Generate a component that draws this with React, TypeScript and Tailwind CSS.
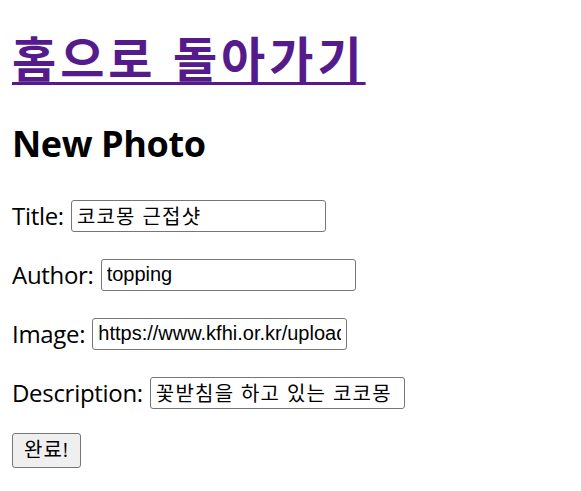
const fieldFont = "font-['Liberation_Sans','Noto_Sans_CJK_KR',sans-serif]";

const Field = ({ label, value, korean }: { label: string; value: string; korean?: boolean }) => (
  <p className="mt-6 flex h-[35px] items-center">
    <label className="mr-[7px] tracking-[-0.3px]">{label}</label>
    <input
      type="text"
      defaultValue={value}
      className={`h-[32px] w-[255px] rounded-[3px] border-[1.5px] border-[#767676] bg-white px-[5px] text-[20px] text-black outline-none ${fieldFont} ${korean ? "tracking-[1.2px]" : ""}`}
    />
  </p>
);

const App = () => {
  return (
    <div className="min-h-screen bg-white px-3 pt-[30px] font-['Open_Sans','Noto_Sans_CJK_KR',sans-serif] text-[24px] text-black">
      <h1 className="text-[48px] font-bold leading-[58px]">
        <a href="#" className="tracking-[4px] text-[#551a8b] underline decoration-[3px] underline-offset-[5px]">
          홈으로 돌아가기
        </a>
      </h1>
      <h2 className="mt-8 text-[36px] font-bold leading-[48px] tracking-[-0.4px]">New Photo</h2>

      <form className="mt-[30px]">
        <Field label="Title:" value="코코몽 근접샷" korean />
        <Field label="Author:" value="topping" />
        <Field label="Image:" value="https://www.kfhi.or.kr/upload/cocomong.jpg" />
        <Field label="Description:" value="꽃받침을 하고 있는 코코몽" korean />
        <div className="mt-[20px]">
          <button
            type="button"
            className="h-[35px] rounded-[3px] border-[1.5px] border-[#767676] bg-[#efefef] px-[11px] text-[20px] tracking-[1px] text-black"
          >
            완료!
          </button>
        </div>
      </form>
    </div>
  );
};

export default App;
